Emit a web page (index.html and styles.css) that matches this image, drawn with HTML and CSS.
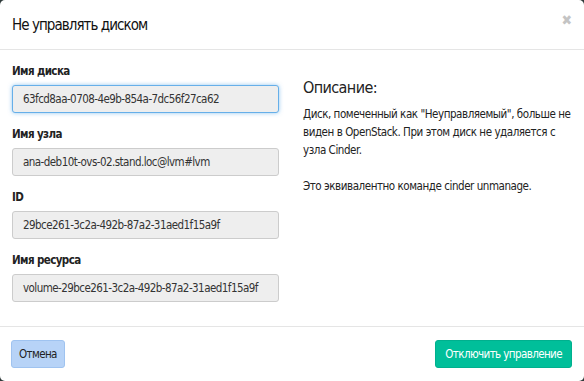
FILE: index.html
```html
<!DOCTYPE html>
<html lang="ru">
<head>
<meta charset="utf-8">
<link rel="stylesheet" href="styles.css">
</head>
<body>
<div class="modal">
  <div class="modal-header">
    <h3 class="title">Не управлять диском</h3>
    <span class="close">&#x2716;</span>
  </div>
  <div class="modal-body">
    <div class="left">
      <div class="field">
        <label class="label">Имя диска</label>
        <div class="input focus">63fcd8aa-0708-4e9b-854a-7dc56f27ca62</div>
      </div>
      <div class="field">
        <label class="label">Имя узла</label>
        <div class="input">ana-deb10t-ovs-02.stand.loc@lvm#lvm</div>
      </div>
      <div class="field">
        <label class="label">ID</label>
        <div class="input">29bce261-3c2a-492b-87a2-31aed1f15a9f</div>
      </div>
      <div class="field">
        <label class="label">Имя ресурса</label>
        <div class="input">volume-29bce261-3c2a-492b-87a2-31aed1f15a9f</div>
      </div>
    </div>
    <div class="right">
      <h3 class="desc-title">Описание:</h3>
      <p class="desc">Диск, помеченный как "Неуправляемый", больше не<br>виден в OpenStack. При этом диск не удаляется с<br>узла Cinder.</p>
      <p class="desc">Это эквивалентно команде cinder unmanage.</p>
    </div>
  </div>
  <div class="modal-footer">
    <button class="btn btn-cancel">Отмена</button>
    <button class="btn btn-primary">Отключить управление</button>
  </div>
</div>
</body>
</html>
```
FILE: styles.css
```css
html, body {
  margin: 0;
  padding: 0;
  background: #2f3a3a;
  width: 584px;
  height: 381px;
  overflow: hidden;
}
body {
  font-family: "DejaVu Sans Condensed", "DejaVu Sans", sans-serif;
  font-stretch: condensed;
  color: #222;
}
.modal {
  background: #fff;
  width: 584px;
  height: 381px;
  border-radius: 5px;
  box-sizing: border-box;
  display: flex;
  flex-direction: column;
}
.modal-header {
  height: 50px;
  box-sizing: border-box;
  border-bottom: 1px solid #e5e5e5;
  display: flex;
  align-items: center;
  justify-content: space-between;
  padding: 0 12px 0 12px;
}
.title {
  margin: 0;
  font-size: 15px;
  letter-spacing: -0.95px;
  font-weight: normal;
  color: #111;
}
.close {
  color: #c4c4c4;
  font-size: 14px;
  margin-top: -10px;
  font-family: "DejaVu Sans", sans-serif;
}
.modal-body {
  flex: 1;
  display: flex;
  padding: 13px 12px 0 12px;
  border-bottom: 1px solid #e5e5e5;
}
.left {
  width: 267px;
  display: flex;
  flex-direction: column;
  gap: 13px;
}
.field {
  display: flex;
  flex-direction: column;
  gap: 6px;
}
.label {
  font-size: 11.5px;
  letter-spacing: -0.6px;
  font-weight: bold;
  color: #222;
  line-height: 16px;
}
.input {
  height: 28px;
  box-sizing: border-box;
  background: #eeeeee;
  border: 1px solid #cccccc;
  border-radius: 3px;
  font-size: 11.5px;
  letter-spacing: -0.55px;
  line-height: 26px;
  padding: 0 10px;
  color: #333;
  white-space: nowrap;
  overflow: hidden;
}
.input.focus {
  border-color: #66afe9;
  box-shadow: 0 0 4px rgba(102, 175, 233, 0.7);
}
.right {
  margin-left: 24px;
  flex: 1;
  padding-top: 15px;
}
.desc-title {
  margin: 0 0 8px 0;
  font-size: 16px;
  letter-spacing: -0.6px;
  font-weight: normal;
  color: #222;
}
.desc {
  margin: 0 0 18px 0;
  font-size: 11.5px;
  letter-spacing: -0.45px;
  line-height: 18px;
  color: #222;
  white-space: nowrap;
}
.modal-footer {
  height: 54px;
  display: flex;
  align-items: center;
  justify-content: space-between;
  padding: 0 12px 0 11px;
}
.btn {
  height: 28px;
  border-radius: 3px;
  font-family: inherit;
  font-size: 11.5px;
  letter-spacing: -0.6px;
  padding: 0 9px;
  cursor: pointer;
}
.btn-cancel {
  background: #b7d3f7;
  border: 1px solid #9fc3f0;
  color: #222;
  padding: 0 7px;
}
.btn-primary {
  background: #00bf9a;
  border: 1px solid #00b08e;
  color: #fff;
}
```
